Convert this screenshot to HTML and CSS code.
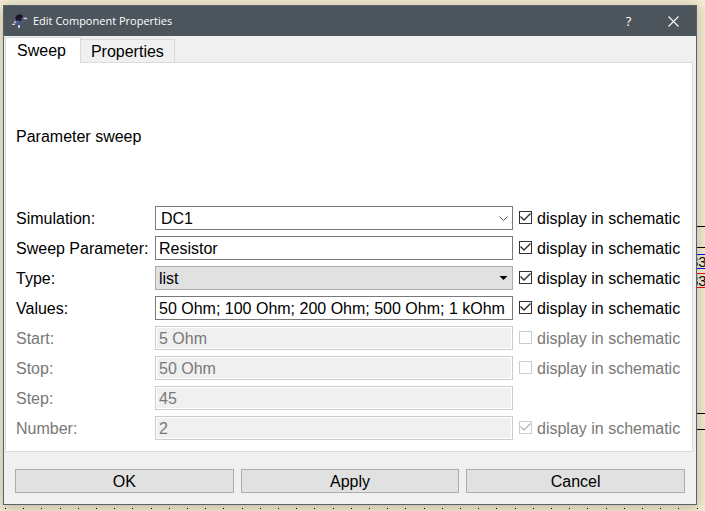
FILE: index.html
```html
<!DOCTYPE html>
<html lang="en">
<head>
<meta charset="utf-8">
<title>Edit Component Properties</title>
<link rel="stylesheet" href="styles.css">
</head>
<body>
<svg class="schematic" aria-hidden="true">
  <g shape-rendering="crispEdges" fill="none">
    <path class="grid-dots" d="M5 508.500H2000"/>
    <path class="wire" d="M690 226.500H2000M690 247.500H2000M690 413.500H2000M690 429.500H2000"/>
    <path class="port-blue" d="M690 254.500H2000M690 268.500H2000"/>
    <path class="port-red" d="M690 273.500H2000M690 287.500H2000"/>
  </g>
  <text x="690" y="267">83</text>
  <text x="690" y="286">83</text>
</svg>

<main class="dialog">
  <header class="titlebar">
    <svg class="app-icon" viewBox="0 0 16 14" aria-hidden="true">
      <path d="M0 11L2 7L4 4L7 1L10 0L11 3L14 3L16 5L13 6L11 5L10 9L8 10L8 14L6 13L6 10L4 8L2 11Z" fill="#777c96"/>
      <path d="M3 4L5 1L9 0L11 2L10 6L9 9L7 8L5 7L4 7Z" fill="#17172b"/>
      <path d="M5 6L9 7L9 11L6 11Z" fill="#3a5590"/>
      <path d="M3 4h1v2h-1zM8 4h2v1h-2z" fill="#7c243e"/>
      <path d="M0 10h3v1h-3zM2 8h2v1h-2zM12 4h3v1h-3zM6 11h2v3h-2z" fill="#c9cbe5"/>
    </svg>
    <h1>Edit Component Properties</h1>
    <button class="title-button" type="button" aria-label="Help">?</button>
    <button class="title-button" type="button" aria-label="Close">
      <svg width="11" height="11" viewBox="0 0 11 11"><path d="M.5.500L10.500 10.500M10.500.500L.5 10.500" fill="none" stroke="#fff" stroke-width="1.100"/></svg>
    </button>
  </header>

  <div class="content">
    <div class="tabs" role="tablist">
      <button class="tab active" type="button" role="tab" aria-selected="true">Sweep</button>
      <button class="tab" type="button" role="tab" aria-selected="false">Properties</button>
    </div>

    <section class="pane">
      <p class="description">Parameter sweep</p>
      <form class="fields" id="sweep-form">
        <label for="simulation">Simulation:</label>
        <div class="select combo">
          <select id="simulation"><option>DC1</option></select>
          <svg class="arrow" width="9" height="5" viewBox="0 0 9 5"><path d="M.5.500L4.500 4.500L8.500.500" fill="none" stroke="#555"/></svg>
        </div>
        <label class="check"><input type="checkbox" checked>display in schematic</label>

        <label for="parameter">Sweep Parameter:</label>
        <input class="text" id="parameter" type="text" value="Resistor">
        <label class="check"><input type="checkbox" checked>display in schematic</label>

        <label for="type">Type:</label>
        <div class="select dropdown">
          <select id="type"><option>list</option></select>
          <svg class="arrow" width="9" height="4" viewBox="0 0 9 4"><path d="M.5 0H8.500L4.500 4Z" fill="#000"/></svg>
        </div>
        <label class="check"><input type="checkbox" checked>display in schematic</label>

        <label for="values">Values:</label>
        <input class="text" id="values" type="text" value="50 Ohm; 100 Ohm; 200 Ohm; 500 Ohm; 1 kOhm">
        <label class="check"><input type="checkbox" checked>display in schematic</label>

        <label class="disabled" for="start">Start:</label>
        <input class="text" id="start" type="text" value="5 Ohm" disabled>
        <label class="check disabled"><input type="checkbox" disabled>display in schematic</label>

        <label class="disabled" for="stop">Stop:</label>
        <input class="text" id="stop" type="text" value="50 Ohm" disabled>
        <label class="check disabled"><input type="checkbox" disabled>display in schematic</label>

        <label class="disabled" for="step">Step:</label>
        <input class="text" id="step" type="text" value="45" disabled>
        <span></span>

        <label class="disabled" for="number">Number:</label>
        <input class="text" id="number" type="text" value="2" disabled>
        <label class="check disabled"><input type="checkbox" checked disabled>display in schematic</label>
      </form>
    </section>

    <footer class="actions">
      <button type="button">OK</button>
      <button type="button">Apply</button>
      <button type="button">Cancel</button>
    </footer>
  </div>
</main>
</body>
</html>
```
FILE: styles.css
```css
* {
  box-sizing: border-box;
}

body {
  margin: 0;
  padding: 5px 8px 6px 3px;
  background: #f8f1d9;
  color: #000;
  font: 16px/22px "Liberation Sans", Arial, sans-serif;
  overflow: hidden;
}

button,
input,
select {
  margin: 0;
  color: inherit;
  font: inherit;
}

/* Schematic canvas behind the dialog */
.schematic {
  position: absolute;
  inset: 0;
  width: 100%;
  height: 100%;
  font-size: 15px;
}

.grid-dots {
  stroke: #000;
  stroke-dasharray: 1 17.2;
}

.wire {
  stroke: #000;
}

.port-blue {
  stroke: #00f;
}

.port-red {
  stroke: #f00;
}

/* Window */
.dialog {
  position: relative;
  border: 1px solid #56626a;
  background: #f0f0f0;
  box-shadow: 0 2px 14px 2px rgba(60, 50, 20, 0.3);
}

.titlebar {
  display: flex;
  align-items: center;
  height: 30px;
  padding-left: 8px;
  background: #4c555b;
  color: #fff;
}

.app-icon {
  width: 16px;
  height: 14px;
  margin-right: 5px;
}

.titlebar h1 {
  flex: 1;
  margin: 0;
  font: 11px/16px "Open Sans", sans-serif;
}

.title-button {
  display: flex;
  align-items: center;
  justify-content: center;
  width: 45px;
  height: 30px;
  padding: 0;
  border: 0;
  background: none;
  font: 13px/16px "Open Sans", sans-serif;
}

.content {
  padding: 1px 3px 11px 1px;
}

/* Tabs */
.tabs {
  display: flex;
  align-items: flex-end;
}

.tab {
  height: 23px;
  padding: 1px 10px 0;
  border: 1px solid #d9d9d9;
  border-width: 1px 1px 0 0;
  background: #f0f0f0;
}

.tab.active {
  position: relative;
  height: 26px;
  margin-bottom: -1px;
  padding: 0 14px 0 11px;
  border-left-width: 1px;
  background: #fff;
}

.pane {
  padding: 63px 15px 11px 10px;
  border: 1px solid #dcdcdc;
  background: #fff;
}

.description {
  margin: 0 0 58px;
}

/* Property rows */
.fields {
  display: grid;
  grid-template-columns: 133px 1fr 158px;
  grid-auto-rows: 24px;
  gap: 6px;
  align-items: center;
}

.fields label {
  padding-top: 2px;
  white-space: nowrap;
}

.text,
.select {
  width: 100%;
  min-width: 0;
  height: 24px;
  border: 1px solid #7a7a7a;
  background: #fff;
}

.text {
  padding: 2px 3px 0;
}

.text:disabled {
  border-color: #ccc;
  background: #f0f0f0;
  box-shadow: inset 0 0 0 1px #fff;
  color: #787878;
}

.select {
  display: flex;
  align-items: center;
  padding-right: 4px;
}

.select select {
  flex: 1;
  min-width: 0;
  height: 22px;
  padding: 1px 3px 0;
  border: 0;
  background: none;
  appearance: none;
}

.combo select {
  padding-left: 5px;
}

.dropdown {
  border-color: #adadad;
  background: #e1e1e1;
}

.fields .check {
  display: flex;
  align-items: center;
  gap: 5px;
}

.check input {
  display: grid;
  place-items: center;
  flex: none;
  width: 13px;
  height: 13px;
  margin-bottom: 3px;
  border: 1px solid #333;
  background: #fff;
  appearance: none;
}

.check input:checked::before {
  content: "";
  width: 11px;
  height: 11px;
  background: #333;
  clip-path: polygon(0 5px, 1px 4px, 4px 7px, 10px 1px, 11px 2px, 4px 9px);
}

.check input:disabled {
  border-color: #ccc;
}

.check input:disabled::before {
  background: #bbb;
}

.disabled {
  color: #787878;
}

/* Dialog buttons */
.actions {
  display: flex;
  gap: 7px;
  padding: 17px 8px 0 10px;
}

.actions button {
  flex: 1;
  height: 24px;
  padding: 1px 0 0;
  border: 1px solid #adadad;
  background: #e1e1e1;
}
```
